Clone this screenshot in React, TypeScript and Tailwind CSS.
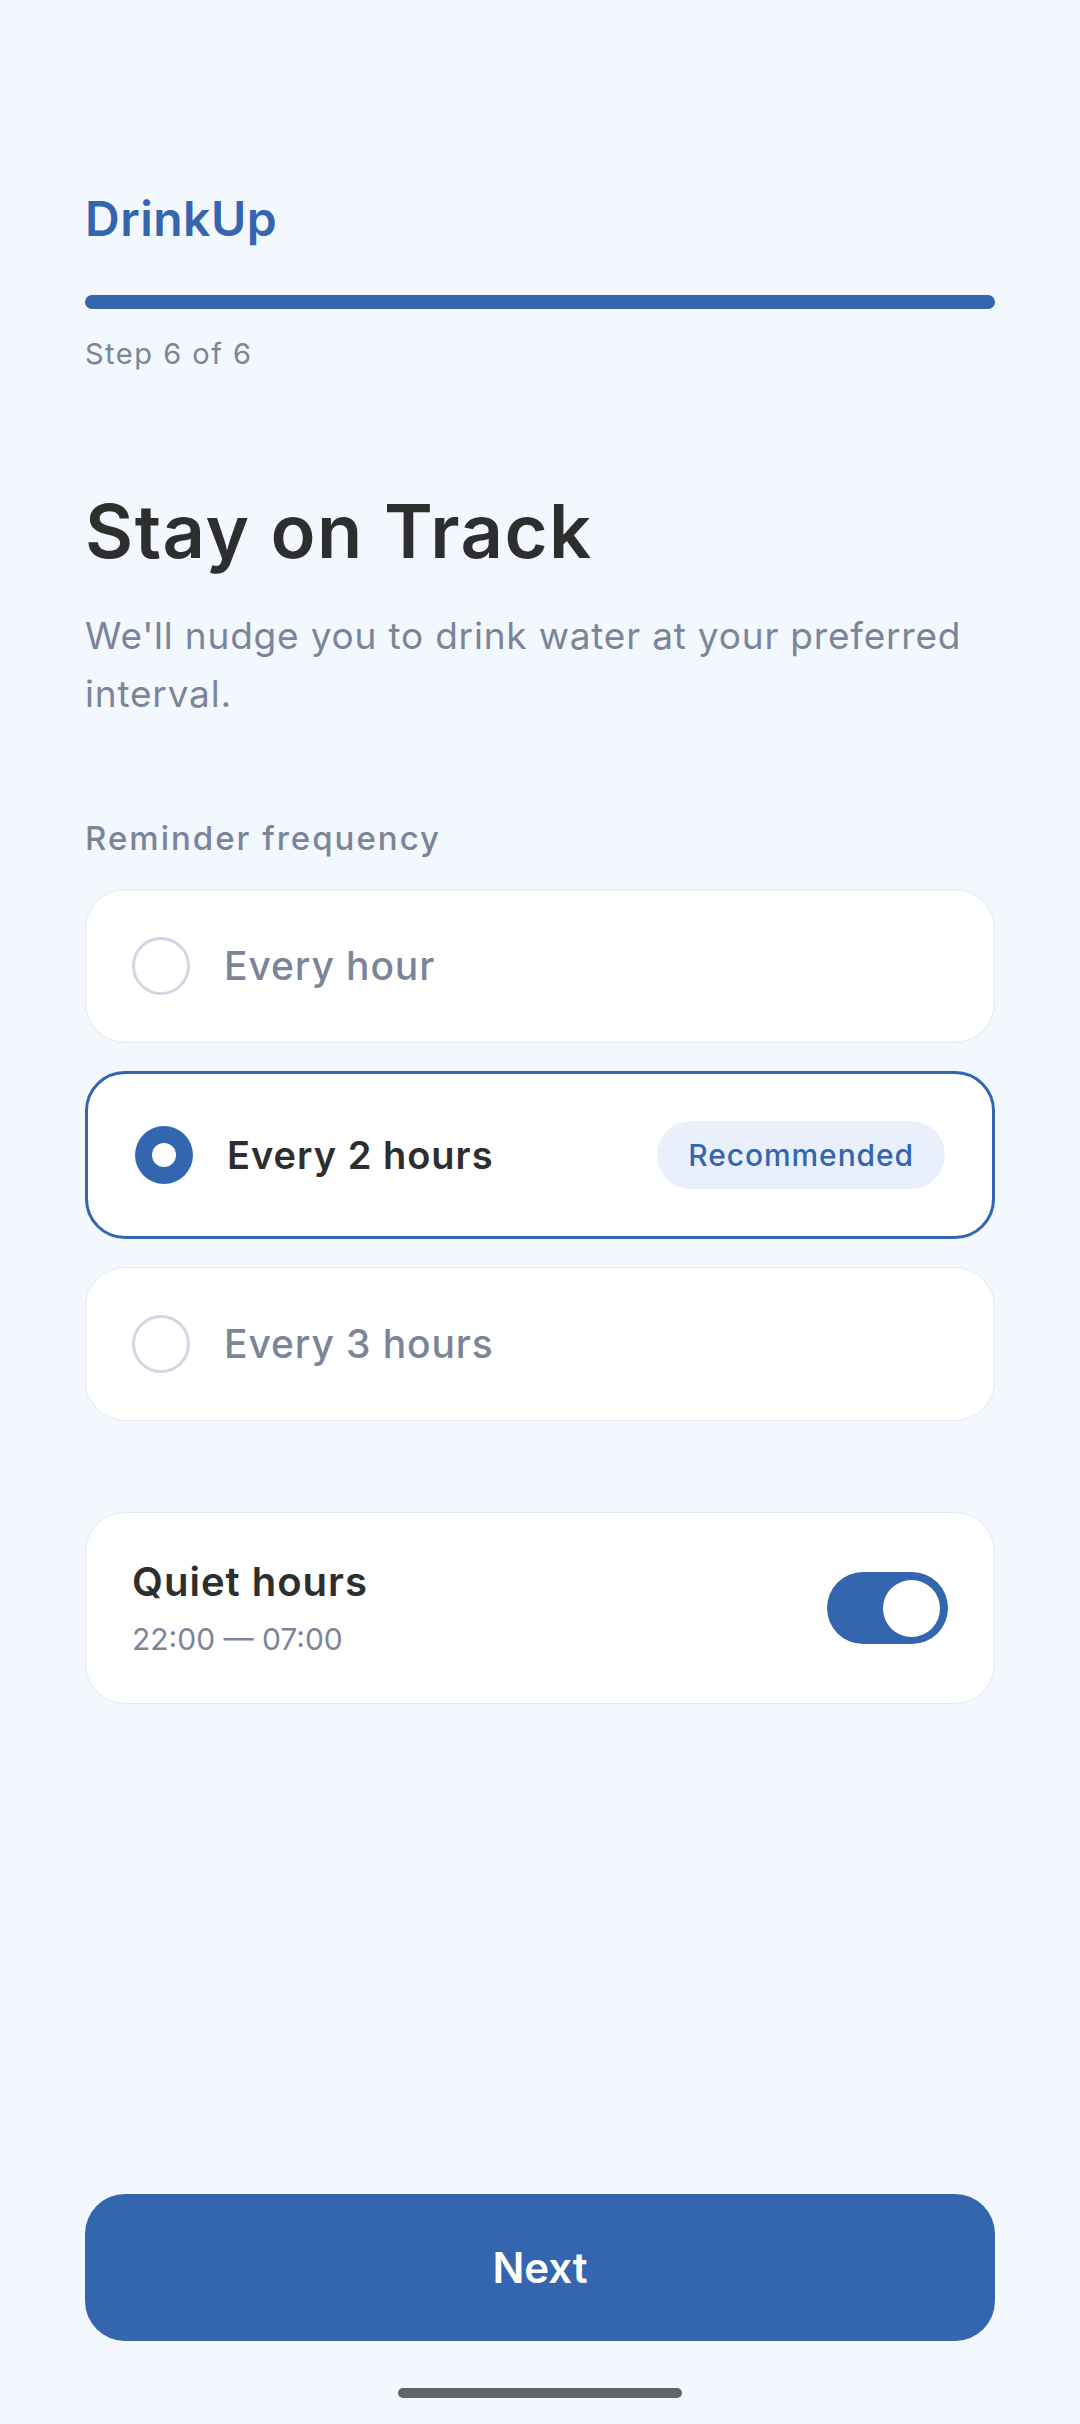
import React from "react";

const font = { fontFamily: "Inter, 'Noto Sans', sans-serif" };

function Radio({ selected }: { selected: boolean }) {
  if (selected) {
    return (
      <div className="w-[58px] h-[58px] shrink-0 rounded-full bg-[#3366ae] flex items-center justify-center">
        <div className="w-[24px] h-[24px] rounded-full bg-white" />
      </div>
    );
  }
  return <div className="w-[58px] h-[58px] shrink-0 rounded-full border-[3px] border-[#cfd8e3] bg-white" />;
}

function Option({ label, selected, badge }: { label: string; selected?: boolean; badge?: string }) {
  return (
    <div
      className={
        selected
          ? "flex items-center rounded-[40px] bg-white border-[3px] border-[#3366ae] px-[47px] py-[47px]"
          : "flex items-center rounded-[40px] bg-white border border-[#e4e9f1] px-[46px] py-[47px]"
      }
    >
      <Radio selected={!!selected} />
      <div
        className={
          selected
            ? "ml-[34px] flex-1 text-[38px] leading-[68px] tracking-[1px] font-semibold text-[#2e2e2e]"
            : "ml-[34px] flex-1 text-[39px] leading-[58px] tracking-[0.9px] font-medium text-[#7b8599]"
        }
      >
        {label}
      </div>
      {badge && (
        <div className="h-[68px] px-[31px] rounded-full bg-[#e9f0fb] flex items-center text-[30px] tracking-[0.9px] font-medium text-[#3366ae]">
          {badge}
        </div>
      )}
    </div>
  );
}

export default function App() {
  return (
    <div className="w-[1080px] h-[2424px] bg-[#f3f7fe] flex flex-col px-[85px]" style={font}>
      <div className="mt-[191px] text-[48px] leading-[56px] tracking-[0.5px] font-semibold text-[#3366ae]">DrinkUp</div>
      <div className="mt-[48px] h-[14px] rounded-full bg-[#3366ae]" />
      <div className="mt-[25px] text-[29px] leading-[40px] tracking-[1.5px] text-[#7b8599]">Step 6 of 6</div>
      <div className="mt-[114px] text-[74px] leading-[86px] tracking-[1.5px] font-semibold text-[#2e2e2e]">Stay on Track</div>
      <div className="mt-[33px] text-[37px] leading-[58px] tracking-[0.8px] text-[#7b8599]">
        We'll nudge you to drink water at your preferred interval.
      </div>
      <div className="mt-[93px] text-[33px] leading-[44px] tracking-[2px] font-medium text-[#7b8599]">Reminder frequency</div>
      <div className="mt-[29px] flex flex-col gap-[28px]">
        <Option label="Every hour" />
        <Option label="Every 2 hours" selected badge="Recommended" />
        <Option label="Every 3 hours" />
      </div>
      <div className="mt-[91px] flex items-center rounded-[40px] bg-white border border-[#e4e9f1] px-[46px] py-[44px]">
        <div className="flex-1 flex flex-col">
          <div className="text-[40px] leading-[50px] tracking-[1px] font-semibold text-[#2e2e2e]">Quiet hours</div>
          <div className="mt-[12px] text-[30px] leading-[40px] text-[#7b8599]">22:00 — 07:00</div>
        </div>
        <div className="w-[121px] h-[72px] rounded-full bg-[#3366ae] flex items-center justify-end pr-[8px]">
          <div className="w-[57px] h-[57px] rounded-full bg-white" />
        </div>
      </div>
      <div className="mt-auto h-[147px] rounded-[40px] bg-[#3366ae] flex items-center justify-center text-[42px] font-semibold text-white">
        Next
      </div>
      <div className="mt-[47px] mb-[26px] h-[10px] w-[284px] self-center rounded-full bg-[#636466]" />
    </div>
  );
}
